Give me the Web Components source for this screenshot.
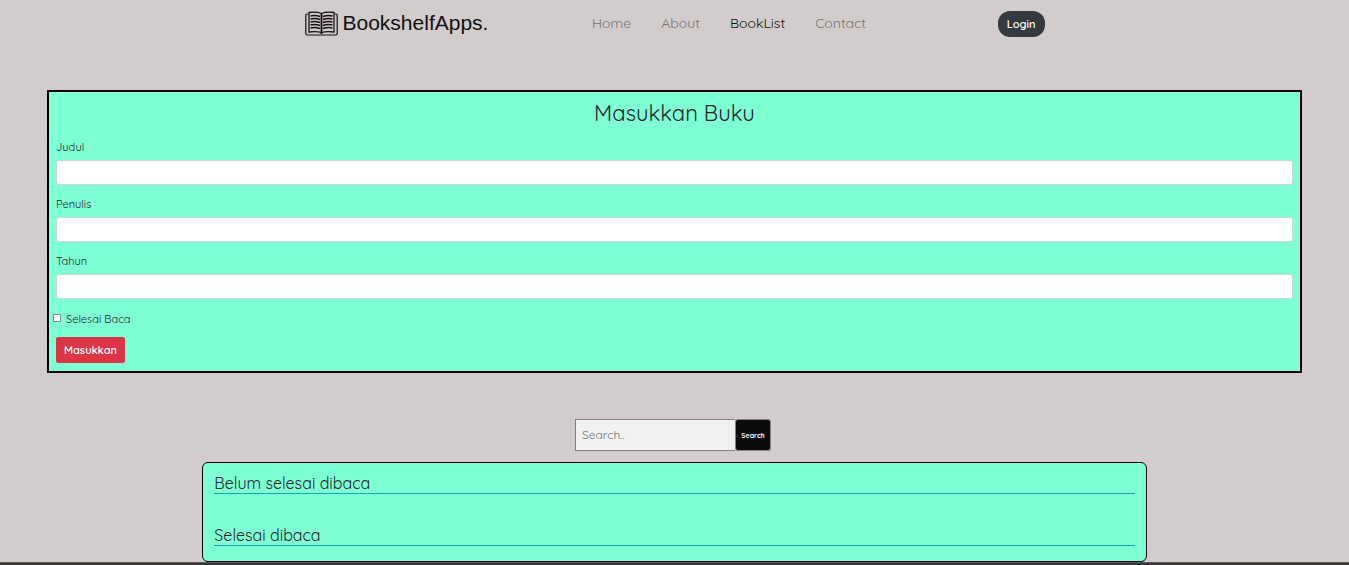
<!DOCTYPE html>
<html lang="id">
<head>
<meta charset="utf-8">
<meta name="viewport" content="width=device-width, initial-scale=1">
<title>BookshelfApps</title>
<style>
html, body { margin: 0; }
body {
  background: #d2cccc;
  color: #212529;
  font-family: Quicksand, Inter, "Open Sans", sans-serif;
  font-weight: 400;
}
</style>
</head>
<body>
<bookshelf-page>
  <site-nav slot="header">
    <nav-item href="#home">Home</nav-item>
    <nav-item href="#about">About</nav-item>
    <nav-item href="#booklist" active>BookList</nav-item>
    <nav-item href="#contact">Contact</nav-item>
  </site-nav>
  <book-form>
    <text-field label="Judul"></text-field>
    <text-field label="Penulis"></text-field>
    <text-field label="Tahun"></text-field>
  </book-form>
  <book-search></book-search>
  <book-lists>
    <book-shelf>Belum selesai dibaca</book-shelf>
    <book-shelf>Selesai dibaca</book-shelf>
  </book-lists>
</bookshelf-page>
<script>
const define = (name, html, setup) => customElements.define(name, class extends HTMLElement {
  constructor() {
    super();
    this.attachShadow({ mode: 'open' }).innerHTML =
      '<style>*{box-sizing:border-box}button,input{font-family:inherit}:host{display:block}</style>' + html;
  }
  connectedCallback() { if (setup) setup(this, this.shadowRoot); }
});

define('bookshelf-page', `
<style>
:host { display: flex; flex-direction: column; min-height: 100vh; }
main { display: flex; flex-direction: column; }
footer { flex: 1; min-height: 2px; border-top: 1px solid #5a5a5b; background: #343539; }
</style>
<slot name="header"></slot>
<main><slot></slot></main>
<footer></footer>`);

define('site-nav', `
<style>
header { display: flex; align-items: center; justify-content: space-between; width: 740px; max-width: 100%; height: 48px; margin: 0 auto; }
.brand { display: flex; align-items: center; gap: 5px; color: #111; text-decoration: none; font: 21px/28px "Liberation Sans", Arial, sans-serif; }
.brand span { padding-bottom: 2px; }
svg { display: block; width: 33px; height: 26px; }
nav { display: flex; gap: 30px; margin-right: 28px; padding-bottom: 2px; }
button { height: 26px; padding: 0 9px; border: 0; border-radius: 12px; background: #343a40; color: #fff; font-size: 11px; font-weight: 600; }
</style>
<header>
  <a class="brand" href="#">
    <svg viewBox="0 0 33 26" fill="none" stroke="#111" aria-hidden="true">
      <path stroke-width="1.2" d="M3.5 3H2Q.8 3 .8 4.500V22Q.8 24 2.200 24H30.800Q32.200 24 32.200 22V4.500Q32.200 3 31 3H29.500"/>
      <path stroke-width="1.300" d="M16.500 2.500Q11.500 .5 4 1.500V21Q11.500 20 16.500 21.500Q21.500 20 29 21V1.500Q21.500 .5 16.500 2.500Z"/>
      <path stroke-width="1.800" d="M16.500 2.500V23"/>
      <path stroke-width="1.500" d="M5.500 5Q10 3.600 15 5.500M5.500 8Q10 6.600 15 8.500M5.500 11Q10 9.600 15 11.500M5.500 14Q10 12.600 15 14.500M5.500 17Q10 15.600 15 17.500M27.500 5Q23 3.600 18 5.500M27.500 8Q23 6.600 18 8.500M27.500 11Q23 9.600 18 11.500M27.500 14Q23 12.600 18 14.500M27.500 17Q23 15.600 18 17.500"/>
    </svg>
    <span>BookshelfApps.</span>
  </a>
  <nav><slot></slot></nav>
  <button type="button">Login</button>
</header>`);

define('nav-item', `
<style>
a { display: block; color: #777474; text-decoration: none; font-size: 14px; line-height: 20px; }
:host([active]) a { color: #111; }
</style>
<a><slot></slot></a>`, (el, root) => {
  const a = root.querySelector('a');
  a.href = el.getAttribute('href');
  if (el.hasAttribute('active')) a.setAttribute('aria-current', 'page');
});

define('book-form', `
<style>
:host { margin: 42px 47px 0; }
form { padding: 7px 7px 8px; border: 2px solid #000; background: #7fffd4; }
h2 { margin: 0 0 12px; text-align: center; font-size: 22px; line-height: 28px; font-weight: 400; }
.check { display: flex; align-items: center; gap: 5px; margin: 0 0 10px -3px; font-size: 11px; line-height: 16px; color: #212529; }
.check input { appearance: none; width: 8px; height: 8px; margin: 0 0 2px; border: 1px solid #8a8a8a; background: #fff; }
.check input:checked { background: #0075ff; }
button { display: block; height: 26px; padding: 0 8px; border: 0; border-radius: 2px; background: #dc3545; color: #fff; font-size: 11px; font-weight: 600; }
</style>
<form>
  <h2>Masukkan Buku</h2>
  <slot></slot>
  <div class="check"><input type="checkbox" id="done"><label for="done">Selesai Baca</label></div>
  <button type="button">Masukkan</button>
</form>`);

define('text-field', `
<style>
:host { margin-bottom: 12px; }
label { display: block; margin-bottom: 5px; font-size: 11px; line-height: 16px; color: #212529; }
input { display: block; width: 100%; height: 25px; padding: 0 8px; border: 1px solid #ced4da; border-radius: 3px; background: #fff; font-size: 11px; }
:host(:not(:last-of-type)) { margin-bottom: 11px; }
</style>
<label for="field"></label>
<input id="field" type="text">`, (el, root) => {
  root.querySelector('label').textContent = el.getAttribute('label');
});

define('book-search', `
<style>
:host { margin-top: 46px; }
form { display: flex; justify-content: center; padding-right: 3px; }
input { width: 160px; height: 32px; padding: 0 6px 2px; border: 1px solid #808080; border-right: 0; border-radius: 0; background: #f1f1f1; font-size: 12px; }
input::placeholder { color: #6c757d; opacity: 1; }
button { width: 36px; height: 32px; padding: 0; border: 1px solid #808080; border-radius: 3px; background: #0b0b0b; color: #fff; font-size: 7px; font-weight: 700; }
</style>
<form>
  <input type="text" placeholder="Search.." aria-label="Search">
  <button type="button">Search</button>
</form>`);

define('book-lists', `
<style>
:host { width: 70%; margin: 11px auto 0; }
section { display: flex; flex-direction: column; gap: 32px; padding: 11px 11px 15px; border: 1px solid #000; border-radius: 6px; background: #7fffd4; }
</style>
<section><slot></slot></section>`);

define('book-shelf', `
<style>
h3 { margin: 0; border-bottom: 1px solid #17a2b8; font-size: 16px; line-height: 19px; font-weight: 400; }
</style>
<h3><slot></slot></h3>`);
</script>
</body>
</html>
